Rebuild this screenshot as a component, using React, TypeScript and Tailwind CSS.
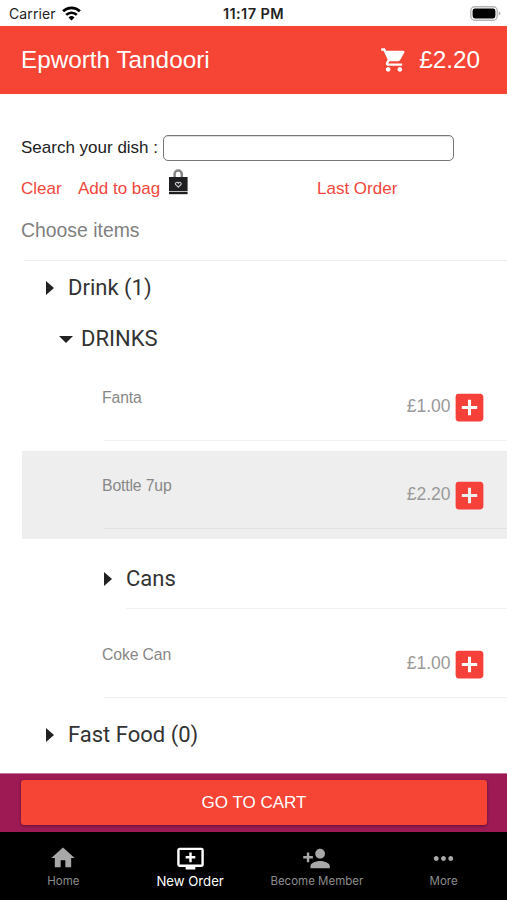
import React, { useState } from 'react';
import { MdAddBox, MdAddToQueue, MdHome, MdMoreHoriz, MdPersonAdd, MdShoppingCart } from 'react-icons/md';
import clsx from 'clsx';

interface ItemRowProps {
    name: string;
    price: string;
    selected?: boolean;
    onAdd?: () => void;
}

const StatusBar: React.FC = () => (
    <div className="h-[26px] relative flex items-center justify-between pl-[9px] pr-[6px] font-['Inter',sans-serif] text-[#222]">
        <div className="flex items-center h-[26px]">
            <span className="text-[14px] leading-[26px] pt-[2px] tracking-[0.1px]">Carrier</span>
            <svg className="ml-[6px] w-[19px] h-[15px]" viewBox="0 0 19 15" fill="none" stroke="#000" strokeWidth="2.7">
                <path d="M1.1 5.3a12 12 0 0 1 16.8 0" />
                <path d="M4.2 8.9a7.6 7.6 0 0 1 10.6 0" />
                <path d="M9.5 14.6 6.5 11.5a4.4 4.4 0 0 1 6 0z" fill="#000" stroke="none" />
            </svg>
        </div>
        <span className="absolute left-0 w-full text-center text-[14.5px] leading-[26px] pt-px tracking-[0.4px] font-semibold">11:17 PM</span>
        <svg className="w-[31px] h-[15px]" viewBox="0 0 31 15">
            <rect x="0.8" y="0.8" width="26.4" height="13.4" rx="4" fill="#fff" stroke="#b5b5b5" strokeWidth="1.4" />
            <rect x="2.6" y="2.6" width="22.8" height="9.8" rx="2.4" fill="#000" />
            <path d="M28.6 5.2q2 .8 2 2.3t-2 2.3z" fill="#b5b5b5" />
        </svg>
    </div>
);

const BagIcon: React.FC = () => (
    <svg className="w-[20px] h-[26px] mt-px" viewBox="0 0 20 26">
        <path d="M6.6 9V5.2a3.6 3.6 0 0 1 7.2 0V9" fill="none" stroke="#858585" strokeWidth="2.5" />
        <path d="M1 8h18.6v14.2H1z" fill="#1f1f21" />
        <path d="M1 22.9h18.6v2.3H1z" fill="#1f1f21" />
        <path d="M10.3 18.2 7.5 15.5a1.4 1.4 0 0 1 2.8-1.3 1.4 1.4 0 0 1 2.8 1.3z" fill="none" stroke="#ccc" strokeWidth="1.1" />
    </svg>
);

const ArrowRight: React.FC = () => (
    <svg className="w-[8px] h-[14px]" viewBox="0 0 8 14" fill="#222">
        <path d="M0 0v14l8-7z" />
    </svg>
);

const ArrowDown: React.FC = () => (
    <svg className="w-[14px] h-[7px]" viewBox="0 0 14 7" fill="#222">
        <path d="M0 0h14L7 7z" />
    </svg>
);

const ItemRow: React.FC<ItemRowProps> = (props: ItemRowProps) => (
    <div className={clsx('ml-[22px] h-[88px] pl-[80px]', props.selected && 'bg-[#eee]')}>
        <div className="h-[77.5px] flex text-[#888]">
            <span className="grow pt-[25.5px] text-[15.8px] leading-[20px] tracking-[-0.15px]">{props.name}</span>
            <span className="pt-[32.5px] text-[17.5px] leading-[22px] text-[#999]">{props.price}</span>
            <button className="mt-[26.5px] mr-[19.5px] h-[37px]" onClick={props.onAdd}>
                <MdAddBox size={37} color="#f6403a" />
            </button>
        </div>
        <div className={clsx('ml-[2px] h-px', props.selected ? 'bg-[#e2e2e2]' : 'bg-[#f0f0f0]')} />
    </div>
);

const tabs = [
    { label: 'Home', icon: <MdHome size={28} /> },
    { label: 'New Order', icon: <MdAddToQueue size={29} /> },
    { label: 'Become Member', icon: <MdPersonAdd size={29} /> },
    { label: 'More', icon: <MdMoreHoriz size={29} /> },
];

const App: React.FC = () => {
    const [activeTab, setActiveTab] = useState(1);

    return (
        <div className="w-[507px] h-[900px] overflow-hidden flex flex-col bg-white font-['Liberation_Sans',Arial,sans-serif]">
            <StatusBar />
            <header className="h-[68px] bg-[#f64435] flex items-center pl-[21px] pr-[27px] text-white text-[24.3px]">
                <span className="grow">Epworth Tandoori</span>
                <MdShoppingCart size={28} />
                <span className="ml-[11px]">£2.20</span>
            </header>

            <div className="h-[167px] pl-[21px] pt-[41px] flex flex-col">
                <div className="h-[26px] flex items-center text-[17px] text-[#222]">
                    <label htmlFor="search" className="w-[142px]">Search your dish :</label>
                    <input id="search" className="w-[291px] h-[26px] px-2 rounded-[5px] border-[1.5px] border-[#777] shadow-[inset_0_1px_1px_#ddd]" />
                </div>
                <div className="h-[39px] pt-[7px] flex text-[17px] leading-[42px] text-[#f0473c]">
                    <span className="w-[57px]">Clear</span>
                    <span className="w-[90px]">Add to bag</span>
                    <BagIcon />
                    <span className="ml-[129px]">Last Order</span>
                </div>
                <div className="pt-[18px] text-[19.4px] leading-[24px] text-[#808080]">Choose items</div>
                <div className="mt-auto ml-[3px] h-px bg-[#eee]" />
            </div>

            <div className="grow font-['Roboto',sans-serif] text-[22px] leading-[26px] text-[#333]">
                <div className="h-[53px] pl-[46px] flex items-center gap-[14px]">
                    <ArrowRight />Drink (1)
                </div>
                <div className="h-[48.5px] pt-[2px] pl-[59px] flex items-center gap-[8px]">
                    <ArrowDown />DRINKS
                </div>
                <div className="font-['Liberation_Sans',Arial,sans-serif]">
                    <ItemRow name="Fanta" price="£1.00" />
                    <ItemRow name="Bottle 7up" price="£2.20" selected={true} />
                </div>
                <div className="h-[69.5px] pt-[11px] pl-[104px] flex items-center gap-[14px]">
                    <ArrowRight />Cans
                </div>
                <div className="ml-[126px] h-px mb-[10px] bg-[#f0f0f0]" />
                <div className="font-['Liberation_Sans',Arial,sans-serif]">
                    <ItemRow name="Coke Can" price="£1.00" />
                </div>
                <div className="h-[56px] pl-[46px] flex items-center gap-[14px]">
                    <ArrowRight />Fast Food (0)
                </div>
            </div>

            <div className="h-[59px] shrink-0 bg-[#9d1a54] border-t border-[#c2749a] pt-[6px] pl-[21px] pr-[20px]">
                <button className="block w-full h-[45px] rounded-[3px] bg-[#f64435] text-white text-[17px] leading-[45px] shadow-[0_1px_3px_rgba(0,0,0,0.4)]">GO TO CART</button>
            </div>
            <nav className="h-[68px] shrink-0 bg-black grid grid-cols-4 font-['Inter',sans-serif]">
                {tabs.map((tab, index) => (
                    <button
                        key={tab.label}
                        className={clsx('flex flex-col items-center whitespace-nowrap', index === activeTab ? 'text-white text-[13.2px]' : 'text-[#8c8c8c] text-[11.5px]')}
                        onClick={() => setActiveTab(index)}
                    >
                        <span className={clsx('h-[29px] mt-[12px]', index !== activeTab && 'text-[#a8a8a8]')}>{tab.icon}</span>
                        <span className="leading-[16px]">{tab.label}</span>
                    </button>
                ))}
            </nav>
        </div>
    );
};

export default App;
